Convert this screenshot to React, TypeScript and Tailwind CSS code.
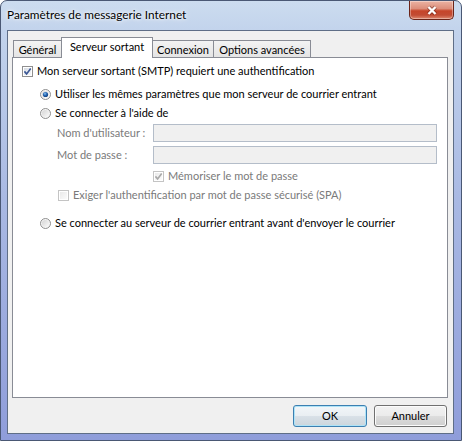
import React from "react";

function CheckBox({ checked, disabled }: { checked?: boolean; disabled?: boolean }) {
  const border = disabled ? "#c4c4c4" : "#8f8f8f";
  const check = disabled ? "#a9a9a9" : "#3b5795";
  const gid = disabled ? "cbgD" : "cbgE";
  return (
    <svg width="11" height="11" viewBox="0 0 11 11" className="shrink-0">
      <defs>
        <linearGradient id={gid} x1="0" y1="0" x2="1" y2="1">
          <stop offset="0" stopColor={disabled ? "#eaeaea" : "#d6dbe2"} />
          <stop offset="1" stopColor={disabled ? "#fbfbfb" : "#f8f9fa"} />
        </linearGradient>
      </defs>
      <rect x="0.5" y="0.5" width="10" height="10" fill="#fff" stroke={border} />
      <rect x="2" y="2" width="7" height="7" fill={`url(#${gid})`} />
      {checked && (
        <path d="M2.4 5.4 L4.6 7.9 L8.7 2.4" stroke={check} strokeWidth="1.6" fill="none" />
      )}
    </svg>
  );
}

function Radio({ selected }: { selected?: boolean }) {
  return (
    <svg width="11" height="11" viewBox="0 0 11 11" className="shrink-0">
      <defs>
        <linearGradient id="rbg" x1="0" y1="0" x2="1" y2="1">
          <stop offset="0" stopColor="#d4d4d4" />
          <stop offset="1" stopColor="#fbfbfb" />
        </linearGradient>
        <radialGradient id="rdot" cx="0.4" cy="0.35" r="0.7">
          <stop offset="0" stopColor="#8fc3f0" />
          <stop offset="0.45" stopColor="#2a6cb8" />
          <stop offset="1" stopColor="#0f3a78" />
        </radialGradient>
      </defs>
      <circle cx="5.5" cy="5.5" r="5" fill="#f6f6f6" stroke="#8f8f8f" />
      <circle cx="5.5" cy="5.5" r="3.6" fill="url(#rbg)" />
      {selected && <circle cx="5.5" cy="5.5" r="2.6" fill="url(#rdot)" />}
    </svg>
  );
}

export default function App() {
  return (
    <div className="w-[462px] h-[441px] font-['Lato','Open_Sans',sans-serif] text-[11px] text-black">
      <div className="w-full h-full flex flex-col rounded-t-[7px] border border-[#4a5874] overflow-hidden bg-[linear-gradient(180deg,#ccdcef_0%,#c2d3ec_7%,#a9b9e3_45%,#8f9dda_100%)]">
        {/* Title bar */}
        <div className="h-[29px] shrink-0 flex items-start justify-between">
          <div className="pl-[6px] pt-[7px] leading-[14px] text-[11.8px] [text-shadow:0_0_6px_#ffffff,0_0_3px_#ffffff]">
            Paramètres de messagerie Internet
          </div>
          <div className="mr-[7px] w-[45px] h-[19px] rounded-b-[5px] border border-t-0 border-[#6b2418] bg-[linear-gradient(180deg,#ebb3a3_0%,#dc8e7b_42%,#c6452a_55%,#c24b33_78%,#df8a70_100%)] shadow-[inset_0_0_0_1px_rgba(255,255,255,0.35)] flex items-center justify-center">
            <svg width="14" height="11" viewBox="0 0 14 11">
              <path d="M3.5 2 L10.5 9 M10.5 2 L3.5 9" stroke="#5a1a10" strokeWidth="4.2" opacity="0.45" />
              <path d="M3.5 2 L10.5 9 M10.5 2 L3.5 9" stroke="#ffffff" strokeWidth="2.3" />
            </svg>
          </div>
        </div>

        {/* Client area */}
        <div className="flex-1 ml-[6px] mr-[7px] mb-[6px] border border-[#5f6e87] bg-[#f0f0f0] flex flex-col">
          {/* Tabs */}
          <div className="pt-[6px] pl-[5px]">
            <div className="h-[21px] flex items-end">
              <div className="w-[49px] h-[17px] mb-px border border-b-0 border-[#898c95] bg-[linear-gradient(180deg,#f3f3f3,#e4e4e4)] flex justify-center pt-[2px] leading-[14px]">
                Général
              </div>
              <div className="-ml-px w-[92px] h-[21px] relative z-10 border border-b-0 border-[#898c95] bg-white flex justify-center pt-[2px] leading-[14px]">
                Serveur sortant
              </div>
              <div className="-ml-px w-[62px] h-[17px] mb-px border border-b-0 border-[#898c95] bg-[linear-gradient(180deg,#f3f3f3,#e4e4e4)] flex justify-center pt-[2px] leading-[14px]">
                Connexion
              </div>
              <div className="-ml-px w-[98px] h-[17px] mb-px border border-b-0 border-[#898c95] bg-[linear-gradient(180deg,#f3f3f3,#e4e4e4)] flex justify-center pt-[2px] leading-[14px]">
                Options avancées
              </div>
            </div>
          </div>

          {/* Panel */}
          <div className="-mt-px ml-[4px] mr-[5px] h-[341px] border border-[#898c95] bg-white flex flex-col leading-[16px]">
            <div className="mt-[5px] h-[16px] flex items-center pl-[9px] gap-[4px]">
              <CheckBox checked />
              <span>Mon serveur sortant (SMTP) requiert une authentification</span>
            </div>
            <div className="mt-[7px] h-[16px] flex items-center pl-[27px] gap-[4px]">
              <Radio selected />
              <span>Utiliser les mêmes paramètres que mon serveur de courrier entrant</span>
            </div>
            <div className="mt-[3px] h-[16px] flex items-center pl-[27px] gap-[4px]">
              <Radio />
              <span>Se connecter à l'aide de</span>
            </div>
            <div className="mt-[3px] h-[18px] flex items-center pl-[44px] text-[#7a7a7a]">
              <span className="w-[96px]">Nom d'utilisateur :</span>
              <div className="w-[284px] h-[18px] border border-[#b4bdc9] bg-[#f0f0f0]" />
            </div>
            <div className="mt-[4px] h-[18px] flex items-center pl-[44px] text-[#7a7a7a]">
              <span className="w-[96px]">Mot de passe :</span>
              <div className="w-[284px] h-[18px] border border-[#b4bdc9] bg-[#f0f0f0]" />
            </div>
            <div className="mt-[4px] h-[16px] flex items-center pl-[140px] gap-[4px] text-[#7a7a7a]">
              <CheckBox checked disabled />
              <span>Mémoriser le mot de passe</span>
            </div>
            <div className="mt-[3px] h-[16px] flex items-center pl-[45px] gap-[4px] text-[#7a7a7a]">
              <CheckBox disabled />
              <span>Exiger l'authentification par mot de passe sécurisé (SPA)</span>
            </div>
            <div className="mt-[12px] h-[16px] flex items-center pl-[27px] gap-[4px]">
              <Radio />
              <span>Se connecter au serveur de courrier entrant avant d'envoyer le courrier</span>
            </div>
          </div>

          {/* Buttons */}
          <div className="mt-[7px] h-[22px] flex justify-end gap-[7px] pr-[6px]">
            <div className="w-[74px] h-[22px] rounded-[3px] border border-[#3c7fb1] bg-[linear-gradient(180deg,#f2f6f9_0%,#e9eef2_50%,#d9e1e8_50%,#ccd5dc_100%)] shadow-[inset_0_0_0_1px_#aee3f7] flex items-center justify-center leading-[14px]">
              OK
            </div>
            <div className="w-[73px] h-[22px] rounded-[3px] border border-[#707070] bg-[linear-gradient(180deg,#f2f2f2_0%,#ebebeb_50%,#dddddd_50%,#cfcfcf_100%)] shadow-[inset_0_0_0_1px_#fcfcfc] flex items-center justify-center leading-[14px]">
              Annuler
            </div>
          </div>
        </div>
      </div>
    </div>
  );
}
